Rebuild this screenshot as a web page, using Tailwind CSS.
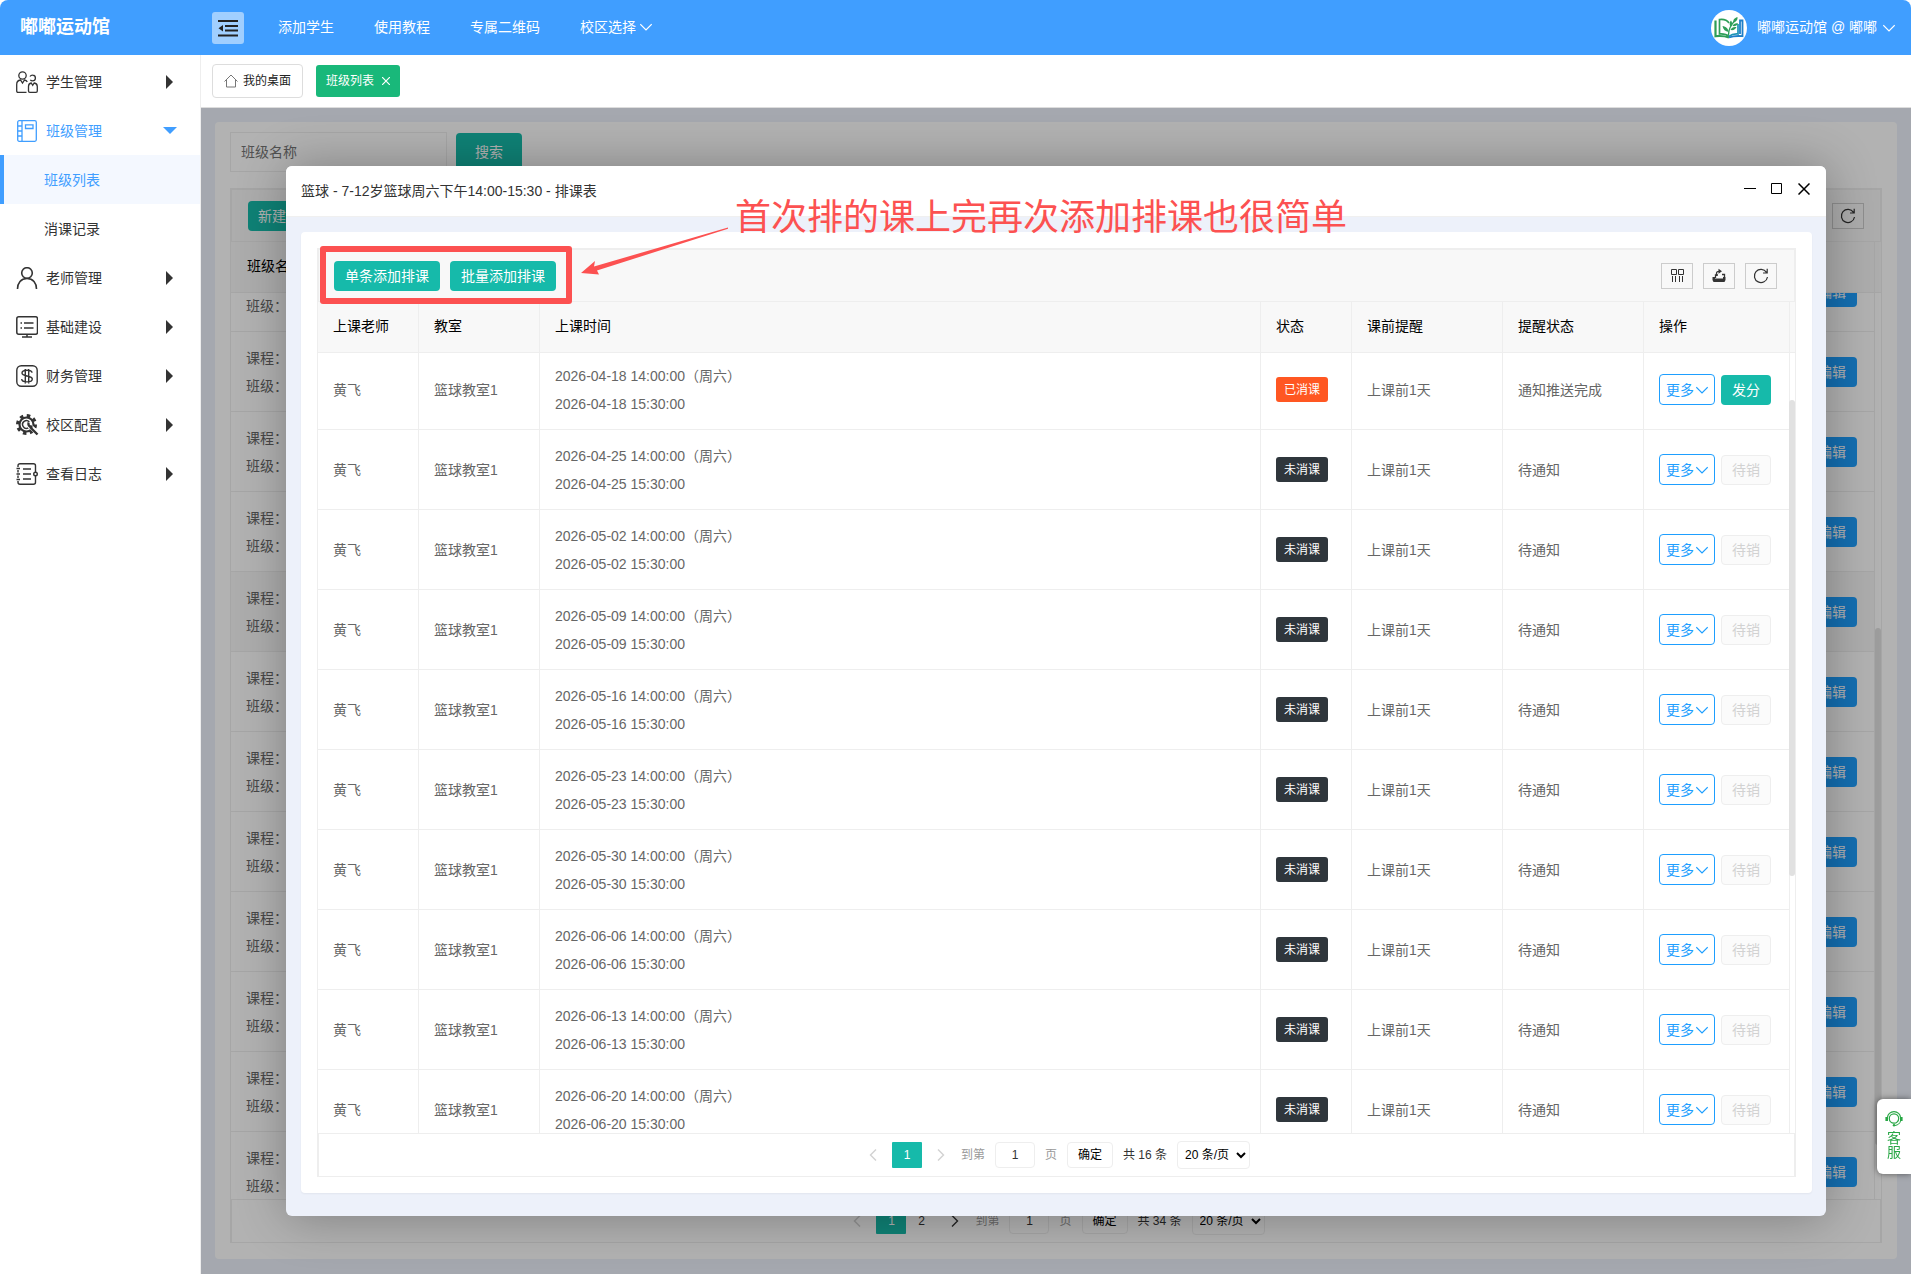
<!DOCTYPE html>
<html lang="zh-CN">
<head>
  <meta charset="UTF-8" />
  <meta name="viewport" content="width=device-width, initial-scale=1.0" />
  <title>嘟嘟运动馆 - 班级列表</title>
  <script src="https://cdn.jsdelivr.net/npm/@tailwindcss/browser@4"></script>
</head>
<body class="h-screen flex flex-col overflow-hidden bg-white text-sm text-[#333] font-['Liberation_Sans','Noto_Sans_CJK_SC',sans-serif]">

  <!-- icons -->
  <svg class="hidden">
    <symbol id="i-down" viewBox="0 0 12 12"><path d="M0.300 3.200L6 8.900l5.700-5.700" fill="none" stroke="currentColor" stroke-width="1.200" /></symbol>
    <symbol id="i-refresh" viewBox="0 0 16 16"><path d="M14.500 9A6.600 6.600 0 1 1 13.500 4.300M14.200 0.800v4.200h-4.200" fill="none" stroke="currentColor" stroke-width="1.200" /></symbol>
    <symbol id="i-cols" viewBox="0 0 16 16"><path d="M2.500 1.500h5v5h-5zM9.500 1.500h5v5h-5zM3.500 8v6M6.500 8v6M10.500 8v6M13.500 8v6" fill="none" stroke="currentColor" /></symbol>
    <symbol id="i-export" viewBox="0 0 16 16"><path d="M1.500 9h2.500v1.500h8V9h2.500v3l-1 2h-11l-1-2z" fill="currentColor" /><path d="M4.500 10V7h2.500M11 6.500h2.500V9M5.500 8V5.500c0-1.500 1-2.200 3-2.200" fill="none" stroke="currentColor" stroke-width="1.300" /><path d="M7.500 0.800l3.500 2.500-3.500 2.500z" fill="currentColor" /></symbol>
    <symbol id="i-prev" viewBox="0 0 8 12"><path d="M7 0.500L1.500 6 7 11.500" fill="none" stroke="currentColor" stroke-width="1.400" /></symbol>
    <symbol id="i-next" viewBox="0 0 8 12"><path d="M1 0.500L6.500 6 1 11.500" fill="none" stroke="currentColor" stroke-width="1.400" /></symbol>
  </svg>

  <header class="h-[55px] shrink-0 flex items-center bg-[#409eff] text-white rounded-t-lg">
    <h1 class="w-[212px] pl-5 text-lg leading-6 pb-0.5 font-bold">嘟嘟运动馆</h1>
    <button class="w-8 h-8 rounded-[3px] bg-[#a0cfff] text-[#222] flex items-center justify-center" aria-label="收起菜单">
      <svg class="w-5 h-[18px]" viewBox="0 0 20 18"><path d="M0 2h20M7 7h13M7 11.500h13M0 16.500h20" stroke="currentColor" stroke-width="2" /><path d="M0.500 9.200L5 6v6.400z" fill="currentColor" /></svg>
    </button>
    <nav class="flex items-center gap-10 ml-[34px] pb-0.5">
      <a href="#">添加学生</a>
      <a href="#">使用教程</a>
      <a href="#">专属二维码</a>
      <a href="#" class="flex items-center gap-1">校区选择<svg class="w-3 h-3"><use href="#i-down" /></svg></a>
    </nav>
    <a href="#" class="ml-auto mr-4 flex items-center">
      <svg class="w-9 h-9 mr-2.5" viewBox="0 0 36 36">
        <circle cx="18" cy="18" r="18" fill="#fff" />
        <path d="M18 26.500c-2.500-2.200-5.500-2.800-9.500-2.500V9.500c4-.5 7.500.5 9.500 3.500" fill="none" stroke="#2e9e57" stroke-width="1.700" />
        <path d="M18 27.500c-4-1.500-8-1.800-13.500-1.300V10.500" fill="none" stroke="#2e9e57" stroke-width="2.200" />
        <path d="M18 26.500c2.500-2.200 5-2.800 9-2.500V14" fill="none" stroke="#1c93b5" stroke-width="1.700" />
        <path d="M18 27.500c4-1.500 8-1.800 13.500-1.300V10.500h-2.500V24" fill="none" stroke="#1f7fc8" stroke-width="1.800" />
        <path d="M17.500 25c0-6 2-10 7-15" fill="none" stroke="#2e9e57" stroke-width="1.300" />
        <path d="M17.500 22c-3-.5-5.500-2.500-6-6 3.500.5 6 2.500 6 6zM19.500 16.500c-1.500-2-1-4.500.5-6 1.500 2 1.500 4-.5 6zM22.500 12.500c-.5-2 0-4 4-5.500.5 3-1.300 4.800-4 5.500zM19.500 20c1-2.500 3-3.500 6-3-1 2.500-3 3.500-6 3zM21.500 16c1-2 3-3 5.500-2.500-1 2.200-3 3-5.500 2.500z" fill="#2e9e57" />
      </svg>
      <span class="pb-0.5">嘟嘟运动馆 @ 嘟嘟</span>
      <svg class="w-3 h-3 ml-1.5"><use href="#i-down" /></svg>
    </a>
  </header>

  <div class="flex-1 min-h-0 flex">
    <aside class="w-[201px] shrink-0 border-r border-[#eee] pt-0.5">
      <ul>
        <li><a href="#" class="h-[49px] flex items-center px-4">
          <svg class="w-[22px] h-[22px]" viewBox="0 0 22 22" fill="none" stroke="currentColor" stroke-width="1.300"><circle cx="6.500" cy="4.500" r="3.700" /><path d="M10.500 21.300H2c-.8 0-1.300-.5-1.300-1.300v-6.500c0-2.500 1.500-4.200 3.800-4.500L6.500 12l2-3c1.200.2 2.200.8 2.800 1.800" /><path d="M14 5.500c.6-.9 1.600-1.400 2.700-1.300 1.500.1 2.800 1.400 2.700 3-.1 1.500-1.300 2.700-2.900 2.700-.9 0-1.700-.4-2.200-1" /><path d="M12.500 20v-4.500c0-1.900 1-3.200 2.700-3.500l1.500 2.300 1.500-2.300c1.900.3 3.100 1.600 3.100 3.500V20c0 .8-.5 1.300-1.300 1.300h-6.200c-.8 0-1.300-.5-1.300-1.300z" /></svg>
          <span class="ml-2">学生管理</span>
          <svg class="ml-auto mr-[11px] w-[7px] h-3.5" viewBox="0 0 7 14"><path d="M0 0l7 7-7 7z" fill="currentColor" /></svg>
        </a></li>
        <li><a href="#" class="h-[49px] flex items-center px-4 text-[#409eff]">
          <svg class="w-[22px] h-[22px]" viewBox="0 0 22 22" fill="none" stroke="currentColor" stroke-width="1.300"><rect x="1.700" y="0.700" width="18.600" height="20.600" rx="1.500" /><path d="M6 1v20M2 6h4M2 11h4M2 16h4M9.500 4.800h7.500v3.700H9.500z" /></svg>
          <span class="ml-2">班级管理</span>
          <svg class="ml-auto mr-[7px] w-3.5 h-[7px]" viewBox="0 0 14 7"><path d="M0 0h14L7 7z" fill="currentColor" /></svg>
        </a></li>
        <li><a href="#" class="h-[49px] flex items-center pl-10 border-l-4 border-[#409eff] bg-[#f4f8ff] text-[#409eff]">班级列表</a></li>
        <li><a href="#" class="h-[49px] flex items-center pl-11">消课记录</a></li>
        <li><a href="#" class="h-[49px] flex items-center px-4">
          <svg class="w-[22px] h-[22px]" viewBox="0 0 22 22" fill="none" stroke="currentColor" stroke-width="1.600"><circle cx="11" cy="6" r="5.300" /><path d="M1.500 22c0-6 3.500-10.500 9.500-10.500s9.500 4.500 9.500 10.500" /></svg>
          <span class="ml-2">老师管理</span>
          <svg class="ml-auto mr-[11px] w-[7px] h-3.5" viewBox="0 0 7 14"><path d="M0 0l7 7-7 7z" fill="currentColor" /></svg>
        </a></li>
        <li><a href="#" class="h-[49px] flex items-center px-4">
          <svg class="w-[22px] h-[22px]" viewBox="0 0 22 22" fill="none" stroke="currentColor" stroke-width="1.500"><rect x="0.800" y="0.800" width="20.700" height="17.500" rx="2" /><path d="M4.500 7h1.500M8 7h9.500M4.500 12h1.500M8 12h9.500M11 18v3M6 21h10" /></svg>
          <span class="ml-2">基础建设</span>
          <svg class="ml-auto mr-[11px] w-[7px] h-3.5" viewBox="0 0 7 14"><path d="M0 0l7 7-7 7z" fill="currentColor" /></svg>
        </a></li>
        <li><a href="#" class="h-[49px] flex items-center px-4">
          <svg class="w-[22px] h-[22px]" viewBox="0 0 22 22" fill="none" stroke="currentColor" stroke-width="1.400"><rect x="0.800" y="0.800" width="20.400" height="20.400" rx="4.500" /><path d="M16 7.800c0-1.600-1.900-2.600-5-2.600s-5 1-5 2.800c0 4 10.300 2 10.300 6 0 1.800-2.200 2.900-5.300 2.900s-5.300-1.100-5.300-2.800M9.300 4v14.500M12.700 4v14.500" /></svg>
          <span class="ml-2">财务管理</span>
          <svg class="ml-auto mr-[11px] w-[7px] h-3.5" viewBox="0 0 7 14"><path d="M0 0l7 7-7 7z" fill="currentColor" /></svg>
        </a></li>
        <li><a href="#" class="h-[49px] flex items-center px-4">
          <svg class="w-[23px] h-[22px] -mr-px" viewBox="0 0 22 22" fill="none" stroke="currentColor"><circle cx="10" cy="10.500" r="7" stroke-width="2.200" /><circle cx="10" cy="10.500" r="9" stroke-width="3" stroke-dasharray="3.500 3.570" /><path d="M12.800 8a3.800 3.800 0 1 0-1 5.800" stroke-width="1.500" /><path d="M13 11.500l9.500 9.500" stroke="#fff" stroke-width="4.500" /><path d="M13.500 13l7.500 7.500M12 8.500c-.5 3 1 4.500 4 4" stroke-width="2.400" /></svg>
          <span class="ml-2">校区配置</span>
          <svg class="ml-auto mr-[11px] w-[7px] h-3.5" viewBox="0 0 7 14"><path d="M0 0l7 7-7 7z" fill="currentColor" /></svg>
        </a></li>
        <li><a href="#" class="h-[49px] flex items-center px-4">
          <svg class="w-[22px] h-[22px]" viewBox="0 0 22 22" fill="none" stroke="currentColor" stroke-width="1.400"><path d="M2 4V2.700c0-1.200.8-2 2-2h13.500c1.200 0 2 .8 2 2V9M19.500 13v6.300c0 1.200-.8 2-2 2H4c-1.200 0-2-.8-2-2V18M2 7v2.500M2 12.500V15M0.500 5.500h3.500M0.500 11h3.500M0.500 16.500h3.500M7 6h8M7 11h8M7 16h8" /><circle cx="19.500" cy="11" r="1.800" /></svg>
          <span class="ml-2">查看日志</span>
          <svg class="ml-auto mr-[11px] w-[7px] h-3.5" viewBox="0 0 7 14"><path d="M0 0l7 7-7 7z" fill="currentColor" /></svg>
        </a></li>
      </ul>
    </aside>

    <div class="flex-1 min-w-0 flex flex-col">
      <div class="h-[53px] shrink-0 flex items-center gap-[13px] px-[11px] border-b border-[#ddd] text-xs">
        <a href="#" class="h-[34px] flex items-center gap-[5px] px-[11px] border border-[#ddd] rounded text-[#222]">
          <svg class="w-3.5 h-3.5" viewBox="0 0 14 14" fill="none" stroke="#777"><path d="M0.500 7.500L7 1l6.500 6.500M2.500 6v7h9V6" /></svg>我的桌面
        </a>
        <a href="#" class="h-8 flex items-center gap-2 px-2.5 rounded-[3px] bg-[#19b87a] text-white">
          班级列表<svg class="w-2 h-2" viewBox="0 0 8 8"><path d="M0 0l8 8M8 0L0 8" stroke="currentColor" stroke-width="1.200" /></svg>
        </a>
      </div>

      <main class="relative flex-1 min-h-0 flex p-3.5 pb-[15px] bg-[#ecf1fb]">
        <section class="flex-1 min-w-0 flex flex-col bg-white rounded px-[15px] pt-2.5 pb-4">
          <form class="flex items-center gap-[9px] mb-4">
            <input type="text" aria-label="班级名称" placeholder="班级名称" class="w-[217px] h-10 px-2.5 border border-[#eee] placeholder:text-[#757575]" />
            <button type="button" class="w-[66px] h-[38px] rounded-sm bg-[#16baaa] text-white">搜索</button>
          </form>
          <div class="flex-1 min-h-0 flex flex-col border border-[#eee]">
            <div class="h-[53px] shrink-0 flex items-center justify-between px-4 border border-[#eee] bg-[#f8f8f8]">
              <button class="h-[30px] px-2.5 rounded-sm bg-[#16baaa] text-white">新建班级</button>
              <button class="w-8 h-[26px] border border-[#ccc] flex items-center justify-center" aria-label="刷新"><svg class="w-4 h-4"><use href="#i-refresh" /></svg></button>
            </div>
            <div class="shrink-0 bg-[#f8f8f8] pr-1.5 border-b border-[#eee]">
              <table class="w-full table-fixed border-separate border-spacing-0">
                <thead><tr class="h-[50px] text-black">
                  <th class="px-4 pb-0.5 text-left font-normal">班级名称</th>
                  <th class="w-[120px] border-r border-[#eee]"></th>
                </tr></thead>
              </table>
            </div>
            <div class="relative flex-1 min-h-0 overflow-hidden pr-1.5">
              <table class="w-full table-fixed border-separate border-spacing-0 -mt-[41px] text-[#666]">
                <tbody id="classRows"></tbody>
              </table>
              <i class="absolute right-0 top-[37%] h-[57%] w-1.5 rounded-full bg-[#e1e1e1]"></i>
            </div>
            <div id="classPager" class="h-[43px] shrink-0 flex items-center justify-center pl-1.5 border border-b-0 border-[#eee] text-xs"></div>
          </div>
        </section>

        <div class="absolute inset-0 bg-black/30"></div>

        <div role="dialog" aria-labelledby="dialogTitle" class="absolute inset-x-[85px] inset-y-[58px] flex flex-col rounded-md bg-[#edf1fa] shadow-[1px_1px_50px_rgba(0,0,0,0.3)]">
          <div class="h-[51px] shrink-0 flex items-center px-[15px] bg-white border-b border-[#f0f0f0] rounded-t-md">
            <h2 id="dialogTitle">篮球 - 7-12岁篮球周六下午14:00-15:30 - 排课表</h2>
            <div class="ml-auto flex items-center gap-[15px] pr-px pb-1 text-black">
              <button aria-label="最小化"><svg class="w-3 h-3" viewBox="0 0 12 12"><path d="M0 5.500h12" stroke="currentColor" /></svg></button>
              <button aria-label="最大化"><svg class="w-3 h-3" viewBox="0 0 12 12"><path d="M0.500 0.500h10v10H0.500z" fill="none" stroke="currentColor" /></svg></button>
              <button aria-label="关闭"><svg class="w-3 h-3" viewBox="0 0 12 12"><path d="M0.500 0.500l11 11M11.500 0.500l-11 11" stroke="currentColor" stroke-width="1.500" /></svg></button>
            </div>
          </div>

          <div class="flex-1 min-h-0 flex pt-[15px] pl-[15px] pr-3.5 pb-[23px]">
            <div class="flex-1 min-w-0 flex flex-col bg-white rounded p-4 shadow-xs">
              <div class="flex-1 min-h-0 flex flex-col border border-[#eee]">
                <div class="h-[53px] shrink-0 flex items-center gap-2.5 pl-[15px] pr-[17px] border border-[#eee] bg-[#f8f8f8]">
                  <button class="w-[106px] h-[30px] rounded-sm bg-[#16baaa] text-white">单条添加排课</button>
                  <button class="w-[106px] h-[30px] rounded-sm bg-[#16baaa] text-white">批量添加排课</button>
                  <button class="ml-auto w-8 h-[26px] border border-[#ccc] flex items-center justify-center" aria-label="筛选列"><svg class="w-4 h-4"><use href="#i-cols" /></svg></button>
                  <button class="w-8 h-[26px] border border-[#ccc] flex items-center justify-center" aria-label="导出"><svg class="w-4 h-4"><use href="#i-export" /></svg></button>
                  <button class="w-8 h-[26px] border border-[#ccc] flex items-center justify-center" aria-label="刷新"><svg class="w-4 h-4"><use href="#i-refresh" /></svg></button>
                </div>
                <div class="shrink-0 bg-[#f8f8f8] pr-[5px] border-b border-[#eee]">
                  <table class="w-full table-fixed border-separate border-spacing-0">
                    <thead><tr class="h-[50px] text-left text-black">
                      <th class="w-[101px] px-[15px] pb-0.5 font-normal border-r border-[#eee]">上课老师</th>
                      <th class="w-[121px] px-[15px] pb-0.5 font-normal border-r border-[#eee]">教室</th>
                      <th class="px-[15px] pb-0.5 font-normal border-r border-[#eee]">上课时间</th>
                      <th class="w-[91px] px-[15px] pb-0.5 font-normal border-r border-[#eee]">状态</th>
                      <th class="w-[151px] px-[15px] pb-0.5 font-normal border-r border-[#eee]">课前提醒</th>
                      <th class="w-[141px] px-[15px] pb-0.5 font-normal border-r border-[#eee]">提醒状态</th>
                      <th class="w-[146px] px-[15px] pb-0.5 font-normal border-r border-[#eee]">操作</th>
                    </tr></thead>
                  </table>
                </div>
                <div class="relative flex-1 min-h-0 overflow-hidden pr-[5px]">
                  <table class="w-full table-fixed border-separate border-spacing-0 -mt-[3px] text-[#666]">
                    <tbody id="lessonRows"></tbody>
                  </table>
                  <i class="absolute right-0 top-[6%] h-[61%] w-1.5 rounded-full bg-[#e1e1e1]"></i>
                </div>
                <div id="lessonPager" class="h-[43px] shrink-0 flex items-center justify-center pl-1.5 border border-b-0 border-[#eee] text-xs"></div>
              </div>
            </div>
          </div>

          <!-- guide mark -->
          <div class="absolute left-[34px] top-20 w-[252px] h-[58px] border-6 border-[#fc5151] rounded-[3px]"></div>
          <svg class="absolute left-[295px] top-[61px] w-[148px] h-12" viewBox="0 0 148 48"><path d="M0 46L14 34l-1 5.500L147 0.500v1.200L16 43.500l2 4z" fill="#fc5151" /></svg>
          <p class="absolute left-[449px] top-[30px] text-4xl leading-9 whitespace-nowrap text-[#fc5151] font-['Noto_Sans_CJK_SC',sans-serif]">首次排的课上完再次添加排课也很简单</p>
        </div>
      </main>
    </div>
  </div>

  <button class="fixed right-0 bottom-[100px] w-[34px] h-[75px] flex flex-col items-center justify-center pb-1 rounded-l-md bg-white text-[#28a745] leading-[14px] shadow-[0_0_6px_rgba(0,0,0,0.5)]">
    <svg class="w-[18px] h-4 shrink-0 mb-1" viewBox="0 0 18 16" fill="none" stroke="currentColor"><path d="M2.500 6.500a6.500 5.800 0 0 1 13 0" stroke-width="1.200" /><circle cx="9" cy="7.500" r="4.700" stroke-width="1.200" /><path d="M15.500 10c-.5 2.500-2.500 4-5.500 4.500" /><path d="M1.700 6v4M16.300 6v4" stroke-width="2.600" /><circle cx="9" cy="14.300" r="1.200" fill="currentColor" stroke="none" /></svg>
    <span>客</span>
    <span>服</span>
  </button>

  <script>
    const dates = ['04-18', '04-25', '05-02', '05-09', '05-16', '05-23', '05-30', '06-06', '06-13', '06-20'];

    const cell = 'px-[15px] border-r border-b border-[#eee]';

    document.getElementById('lessonRows').innerHTML = dates.map((d, i) => `
      <tr class="h-20">
        <td class="w-[101px] ${cell}">黄飞</td>
        <td class="w-[121px] ${cell}">篮球教室1</td>
        <td class="leading-7 ${cell}">2026-${d} 14:00:00（周六）<br />2026-${d} 15:30:00</td>
        <td class="w-[91px] ${cell}">${i === 0
          ? '<span class="block w-[52px] h-[25px] pt-px text-center text-xs leading-6 rounded-[3px] bg-[#ff5722] text-white">已消课</span>'
          : '<span class="block w-[52px] h-[25px] pt-px text-center text-xs leading-6 rounded-[3px] bg-[#2f363c] text-white">未消课</span>'}</td>
        <td class="w-[151px] ${cell}">上课前1天</td>
        <td class="w-[141px] ${cell}">${i === 0 ? '通知推送完成' : '待通知'}</td>
        <td class="w-[146px] ${cell}">
          <div class="flex items-center gap-1.5">
            <button class="w-14 h-[31px] shrink-0 flex items-center justify-center gap-0.5 border border-[#1e9fff] rounded-sm bg-white text-[#1e9fff]">更多<svg class="w-3 h-3"><use href="#i-down" /></svg></button>
            ${i === 0
              ? '<button class="w-[50px] h-[30px] shrink-0 rounded-sm bg-[#16baaa] text-white">发分</button>'
              : '<button disabled class="w-[50px] h-[30px] shrink-0 rounded-sm border border-[#eee] bg-[#fbfbfb] text-[#d2d2d2]">待销</button>'}
          </div>
        </td>
      </tr>`).join('');

    let rows = '';
    for (let i = 0; i < 12; i++) {
      rows += `
      <tr class="h-20 ${i === 4 ? 'bg-[#f8f8f8]' : ''}">
        <td class="px-[15px] leading-7 border-b border-[#eee]">课程：<br />班级：</td>
        <td class="w-[120px] pr-[17px] text-right border-r border-b border-[#eee]"><button class="w-[50px] h-[30px] rounded-sm bg-[#1e9fff] text-white">编辑</button></td>
      </tr>`;
    }
    document.getElementById('classRows').innerHTML = rows;

    function pager(id, total, pages) {
      document.getElementById(id).innerHTML = `
        <button disabled class="mr-[15px] text-[#d2d2d2]" aria-label="上一页"><svg class="w-2 h-3"><use href="#i-prev" /></svg></button>
        <button class="w-[30px] h-[26px] rounded-[1px] bg-[#16baaa] text-white">1</button>
        ${pages > 1 ? '<button class="w-[30px] h-[26px]">2</button>' : ''}
        <button class="ml-[15px] ${pages > 1 ? 'text-[#333]' : 'text-[#d2d2d2]'}" aria-label="下一页"><svg class="w-2 h-3"><use href="#i-next" /></svg></button>
        <label class="ml-4 flex items-center gap-2.5 text-[#999]">到第
          <input type="text" value="1" class="w-10 h-[26px] border border-[#eee] rounded-sm text-center text-[#333]" />页
        </label>
        <button class="ml-2.5 w-[46px] h-[26px] border border-[#eee] rounded-sm text-black">确定</button>
        <span class="mx-2.5">共 ${total} 条</span>
        <select aria-label="每页条数" class="w-[73px] h-7 pl-[3px] border border-[#eee] rounded-sm text-black"><option>20 条/页</option></select>`;
    }
    pager('lessonPager', 16, 1);
    pager('classPager', 34, 2);
  </script>

</body>
</html>
